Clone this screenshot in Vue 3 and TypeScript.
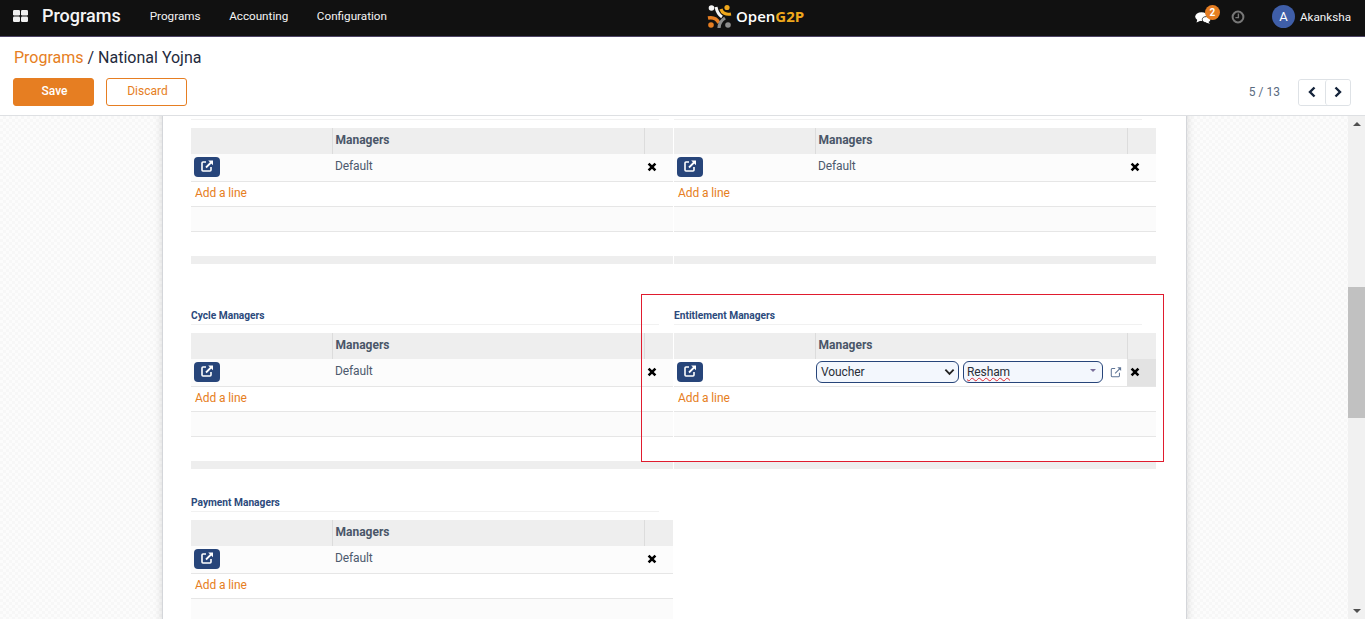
<template>
  <div class="app">
    <header class="navbar">
      <svg class="apps" viewBox="0 0 15 12" width="15" height="12">
        <rect x="0" y="0" width="7" height="5.5" rx="1.2" fill="#f1f1f1" />
        <rect x="8" y="0" width="7" height="5.5" rx="1.2" fill="#f1f1f1" />
        <rect x="0" y="6.5" width="7" height="5.5" rx="1.2" fill="#f1f1f1" />
        <rect x="8" y="6.5" width="7" height="5.5" rx="1.2" fill="#f1f1f1" />
      </svg>
      <span class="brand">Programs</span>
      <nav class="menu">
        <a v-for="item in menu" :key="item">{{ item }}</a>
      </nav>
      <div class="logo">
        <svg viewBox="0 0 26 26" width="26" height="26">
          <circle cx="4.5" cy="4" r="2.8" fill="#f4f4f4" />
          <path d="M9 3 C10 8 12 11 15 13" stroke="#f4f4f4" stroke-width="3" fill="none" />
          <circle cx="20" cy="3.5" r="2.6" fill="#f0a81c" />
          <path d="M14 5 C15 9 19 11 24 10" stroke="#f0a81c" stroke-width="3.2" fill="none" />
          <path d="M1 14 C6 13 10 15 12 19" stroke="#e67e22" stroke-width="3.4" fill="none" />
          <circle cx="4" cy="21" r="2.8" fill="#e67e22" />
          <path d="M12 24 C12 19 15 16 18 14" stroke="#8d8d8d" stroke-width="3.2" fill="none" />
          <circle cx="21" cy="21" r="2.8" fill="#8d8d8d" />
        </svg>
        <span class="logo-text">Open<b>G2P</b></span>
      </div>
      <div class="systray">
        <div class="chat">
          <svg viewBox="0 0 16 12" width="16" height="12">
            <ellipse cx="6.5" cy="4.6" rx="6.3" ry="4.4" fill="#fff" />
            <path d="M2.5 7 L1.5 10.5 L6 8.5 Z" fill="#fff" />
            <ellipse cx="11.5" cy="7.6" rx="4.2" ry="3" fill="#fff" stroke="#111" stroke-width="0.8" />
            <path d="M13 9.5 L15 11.8 L10.5 10.4 Z" fill="#fff" />
          </svg>
          <span class="badge">2</span>
        </div>
        <svg class="clock" viewBox="0 0 14 14" width="14" height="14">
          <circle cx="7" cy="7" r="5.4" fill="none" stroke="#777" stroke-width="2" />
          <path d="M7.4 3.6 V7.6 H4.4" fill="none" stroke="#777" stroke-width="1.4" />
        </svg>
        <div class="user">
          <span class="avatar">A</span>
          <span>Akanksha</span>
        </div>
      </div>
    </header>

    <section class="control">
      <div class="crumbs"><a>Programs</a> / National Yojna</div>
      <div class="actions">
        <button class="btn save">Save</button>
        <button class="btn discard">Discard</button>
        <span class="pager">5 / 13</span>
        <div class="pager-btns">
          <button aria-label="Previous">
            <svg viewBox="0 0 10 12" width="10" height="12"><path d="M7.5 1.5 L3 6 L7.5 10.5" fill="none" stroke="#14233a" stroke-width="2.4" /></svg>
          </button>
          <button aria-label="Next">
            <svg viewBox="0 0 10 12" width="10" height="12"><path d="M2.5 1.5 L7 6 L2.5 10.5" fill="none" stroke="#14233a" stroke-width="2.4" /></svg>
          </button>
        </div>
      </div>
    </section>

    <main class="content">
      <div class="scroller">
        <div class="sheet">
          <div v-for="(row, r) in rows" :key="r" class="group-row" :class="`group-row-${r}`">
            <div v-for="g in row" :key="g.title" class="group">
              <div class="group-title">{{ g.title }}</div>
              <table>
                <colgroup>
                  <col class="col-open" />
                  <col />
                  <col class="col-del" />
                </colgroup>
                <thead>
                  <tr>
                    <th></th>
                    <th>Managers</th>
                    <th></th>
                  </tr>
                </thead>
                <tbody>
                  <tr class="data" :class="{ editing: g.editing }">
                    <td>
                      <span class="open-btn">
                        <svg viewBox="0 0 14 14" width="14" height="14">
                          <path d="M6 3 H3 Q2 3 2 4 V11 Q2 12 3 12 H10 Q11 12 11 11 V8" fill="none" stroke="#fff" stroke-width="1.6" />
                          <path d="M6 8.5 L11.5 3" stroke="#fff" stroke-width="1.8" />
                          <path d="M8.2 1.4 H13 V6.2 Z" fill="#fff" />
                        </svg>
                      </span>
                    </td>
                    <td v-if="g.editing" class="edit-cell">
                      <div class="edit-fields">
                        <div class="field select">
                          <span>Voucher</span>
                          <svg viewBox="0 0 12 8" width="11" height="8"><path d="M1.5 1.5 L6 6 L10.5 1.5" fill="none" stroke="#222" stroke-width="2" /></svg>
                        </div>
                        <div class="field many2one">
                          <span class="misspelled">Resham</span>
                          <i class="caret"></i>
                        </div>
                        <svg class="ext" viewBox="0 0 14 14" width="12" height="12">
                          <path d="M6 3 H2.5 Q1.5 3 1.5 4 V11.5 Q1.5 12.5 2.5 12.5 H10 Q11 12.5 11 11.5 V8" fill="none" stroke="#5f7596" stroke-width="1.2" />
                          <path d="M6 8.5 L11.5 3" stroke="#5f7596" stroke-width="1.3" />
                          <path d="M8.5 1.4 H13 V5.9 Z" fill="#5f7596" />
                        </svg>
                      </div>
                    </td>
                    <td v-else class="name">Default</td>
                    <td class="del">
                      <svg viewBox="0 0 10 10" width="10" height="10"><path d="M1.6 1.6 L8.4 8.4 M8.4 1.6 L1.6 8.4" stroke="#000" stroke-width="2.6" /></svg>
                    </td>
                  </tr>
                  <tr class="add"><td colspan="3"><a>Add a line</a></td></tr>
                  <tr class="empty odd"><td colspan="3"></td></tr>
                  <tr class="empty"><td colspan="3"></td></tr>
                </tbody>
                <tfoot>
                  <tr><td colspan="3"></td></tr>
                </tfoot>
              </table>
            </div>
          </div>
        </div>
        <div class="callout"></div>
      </div>
      <div class="scrollbar">
        <i class="arrow up"></i>
        <div class="track"><div class="thumb"></div></div>
        <i class="arrow down"></i>
      </div>
    </main>
  </div>
</template>

<script setup lang="ts">
interface Group {
  title: string;
  editing?: boolean;
}

const menu: string[] = ['Programs', 'Accounting', 'Configuration'];

const rows: Group[][] = [
  [{ title: 'Notification Managers' }, { title: 'Deduplication Managers' }],
  [{ title: 'Cycle Managers' }, { title: 'Entitlement Managers', editing: true }],
  [{ title: 'Payment Managers' }],
];
</script>

<style>
html,
body {
  margin: 0;
  height: 100%;
  overflow: hidden;
}
</style>

<style scoped>
.app {
  height: 619px;
  display: flex;
  flex-direction: column;
  font-family: Roboto, "Liberation Sans", sans-serif;
  color: #374a63;
  overflow: hidden;
}

/* top bar */
.navbar {
  height: 36px;
  flex: none;
  box-sizing: content-box;
  display: flex;
  align-items: center;
  position: relative;
  background: #111;
  border-bottom: 1px solid #4d4466;
  color: #f4f4f4;
  padding: 0 14px 0 13px;
}
.apps {
  margin: 0 14px 5px 0;
}
.brand {
  font-size: 18px;
  font-weight: 500;
  margin: 0 29px 5px 0;
}
.menu {
  display: flex;
  gap: 28.6px;
  font-size: 11.7px;
  margin-bottom: 5px;
}
.logo {
  position: absolute;
  left: 707px;
  top: 4px;
  display: flex;
  align-items: center;
  gap: 3px;
}
.logo-text {
  font-family: "Open Sans", sans-serif;
  font-size: 15px;
  font-weight: 600;
  color: #fff;
  margin-bottom: 3px;
}
.logo-text b {
  font-weight: 700;
  color: #f0a81c;
}
.systray {
  margin-left: auto;
  display: flex;
  align-items: center;
  margin-bottom: 3px;
}
.chat {
  position: relative;
  display: flex;
  margin: 2px 20px 0 0;
}
.badge {
  position: absolute;
  left: 10px;
  top: -7px;
  width: 15px;
  height: 15px;
  border-radius: 50%;
  background: #e67e22;
  color: #fff;
  font-size: 10px;
  font-weight: 700;
  line-height: 15px;
  text-align: center;
}
.clock {
  margin-right: 27px;
}
.user {
  display: flex;
  align-items: center;
  gap: 5px;
  font-size: 11.7px;
}
.avatar {
  width: 23px;
  height: 23px;
  border-radius: 50%;
  background: #3f5ea8;
  color: #fff;
  font-size: 13px;
  line-height: 23px;
  text-align: center;
}

/* breadcrumb + buttons */
.control {
  height: 79px;
  flex: none;
  box-sizing: border-box;
  background: #fff;
  border-bottom: 1px solid #dee0e3;
  padding: 11px 14px 0 13px;
}
.crumbs {
  font-size: 16px;
  line-height: 19px;
  height: 30px;
  padding-left: 1px;
  color: #1f2b3d;
}
.crumbs a {
  color: #e67e22;
}
.actions {
  display: flex;
  align-items: center;
  height: 28px;
}
.btn {
  width: 81px;
  height: 28px;
  box-sizing: border-box;
  border-radius: 3px;
  font-family: inherit;
  font-size: 12px;
  border: 1px solid #e67e22;
  padding: 0 0 2px 2px;
}
.save {
  background: #e67e22;
  color: #fff;
  font-weight: 500;
  margin-right: 12px;
}
.discard {
  background: #fff;
  color: #e67e22;
}
.pager {
  margin-left: auto;
  margin-right: 18px;
  padding-bottom: 1px;
  font-size: 12px;
  color: #5a6b7f;
}
.pager-btns {
  display: flex;
  height: 27px;
  box-sizing: border-box;
  border: 1px solid #dee2e6;
  border-radius: 3px;
}
.pager-btns button {
  width: 26px;
  padding: 0;
  border: 0;
  background: #fff;
  display: flex;
  align-items: center;
  justify-content: center;
  border-radius: 3px;
}
.pager-btns button + button {
  width: 25px;
  border-left: 1px solid #dee2e6;
}

/* form sheet */
.content {
  flex: 1;
  min-height: 0;
  display: flex;
}
.scroller {
  flex: 1;
  position: relative;
  overflow: hidden;
  padding-left: 162px;
  background-color: #f9f9f9;
  background-image: repeating-conic-gradient(#f7f7f7 0 25%, #fcfcfc 0 50%);
  background-size: 6px 6px;
}
.sheet {
  width: 1025px;
  box-sizing: border-box;
  margin-top: -15px;
  height: 700px;
  background: #fff;
  border: 1px solid #d4d6da;
  border-width: 0 1px;
  box-shadow: 0 0 8px rgba(0, 0, 0, 0.14);
  padding-left: 28px;
}
.group-row {
  display: flex;
  gap: 1px;
}
.group-row-0 {
  margin-bottom: 42px;
}
.group-row-1 {
  margin-bottom: 24px;
}
.group {
  width: 482px;
}
.group-title {
  height: 18px;
  line-height: 20px;
  margin-right: 14px;
  font-size: 10.2px;
  font-weight: 700;
  color: #2c4a7c;
  border-bottom: 1px solid #f1f1f1;
  margin-bottom: 8px;
}
table {
  width: 482px;
  table-layout: fixed;
  border-collapse: collapse;
  font-size: 12px;
  letter-spacing: -0.1px;
}
.col-open {
  width: 141px;
}
.col-del {
  width: 29px;
}
th {
  height: 26px;
  padding: 0 0 2px 3px;
  background: #eeeeee;
  border-left: 1px solid #dcdcdc;
  text-align: left;
  font-weight: 700;
  font-size: 12px;
  letter-spacing: 0;
  color: #4a5668;
  box-sizing: border-box;
}
th:first-child {
  border-left: 0;
}
.data td {
  height: 27px;
  box-sizing: border-box;
  padding: 0;
  background: #fcfcfc;
  border-bottom: 1px solid #e6e6e6;
}
.open-btn {
  display: flex;
  align-items: center;
  justify-content: center;
  box-sizing: border-box;
  width: 26px;
  height: 20px;
  padding-bottom: 2px;
  margin-left: 3px;
  border-radius: 4px;
  background: #27457a;
}
.data .name {
  padding: 0 0 2px 3px;
  color: #4d5a6e;
}
.del {
  padding-left: 1px !important;
}
.del svg {
  display: block;
  margin-left: 2px;
}
.editing td {
  background: #fff;
}
.editing .del {
  background: #e3e3e3;
}
.edit-fields {
  display: flex;
  align-items: center;
  gap: 4px;
  padding-left: 1px;
}
.field {
  height: 22px;
  box-sizing: border-box;
  display: flex;
  align-items: center;
  justify-content: space-between;
  background: #f3f7fd;
  border: 1px solid #27457a;
  border-radius: 6px;
  padding: 0 3px 0 4px;
  color: #2a2f38;
}
.select {
  width: 143px;
}
.many2one {
  width: 140px;
  padding-left: 3px;
}
.misspelled {
  text-decoration: underline wavy #e0262f 1px;
}
.caret {
  width: 0;
  height: 0;
  margin: 0 3px 3px 0;
  border: 3px solid transparent;
  border-top: 3px solid #7a6f9a;
  border-bottom: 0;
}
.ext {
  margin-left: 3px;
}
.add td {
  height: 25px;
  box-sizing: border-box;
  padding: 0 0 2px 4px;
  border-bottom: 1px solid #e6e6e6;
}
.add a {
  color: #e67e22;
}
.empty td {
  height: 25px;
  box-sizing: border-box;
  padding: 0;
  background: #fff;
  border-bottom: 1px solid #e6e6e6;
}
.empty.odd td {
  background: #fbfbfb;
}
.empty:not(.odd) td {
  border-bottom: 0;
}
tfoot td {
  height: 8px;
  padding: 0;
  background: #eeeeee;
}

/* red box drawn over the screenshot */
.callout {
  position: absolute;
  left: 641px;
  top: 178px;
  width: 523px;
  height: 168px;
  box-sizing: border-box;
  border: 1px solid #e01b2e;
  pointer-events: none;
}

/* scrollbar */
.scrollbar {
  width: 17px;
  flex: none;
  display: flex;
  flex-direction: column;
  align-items: center;
  background: #f1f1f1;
}
.track {
  flex: 1;
  width: 100%;
  padding-top: 156px;
  box-sizing: border-box;
}
.thumb {
  height: 131px;
  background: #c1c1c1;
}
.arrow {
  width: 0;
  height: 0;
  border-left: 4px solid transparent;
  border-right: 4px solid transparent;
}
.arrow.up {
  margin: 6px 0 5px;
  border-bottom: 4px solid #505050;
}
.arrow.down {
  margin: 5px 0 6px;
  border-top: 4px solid #505050;
}
</style>
